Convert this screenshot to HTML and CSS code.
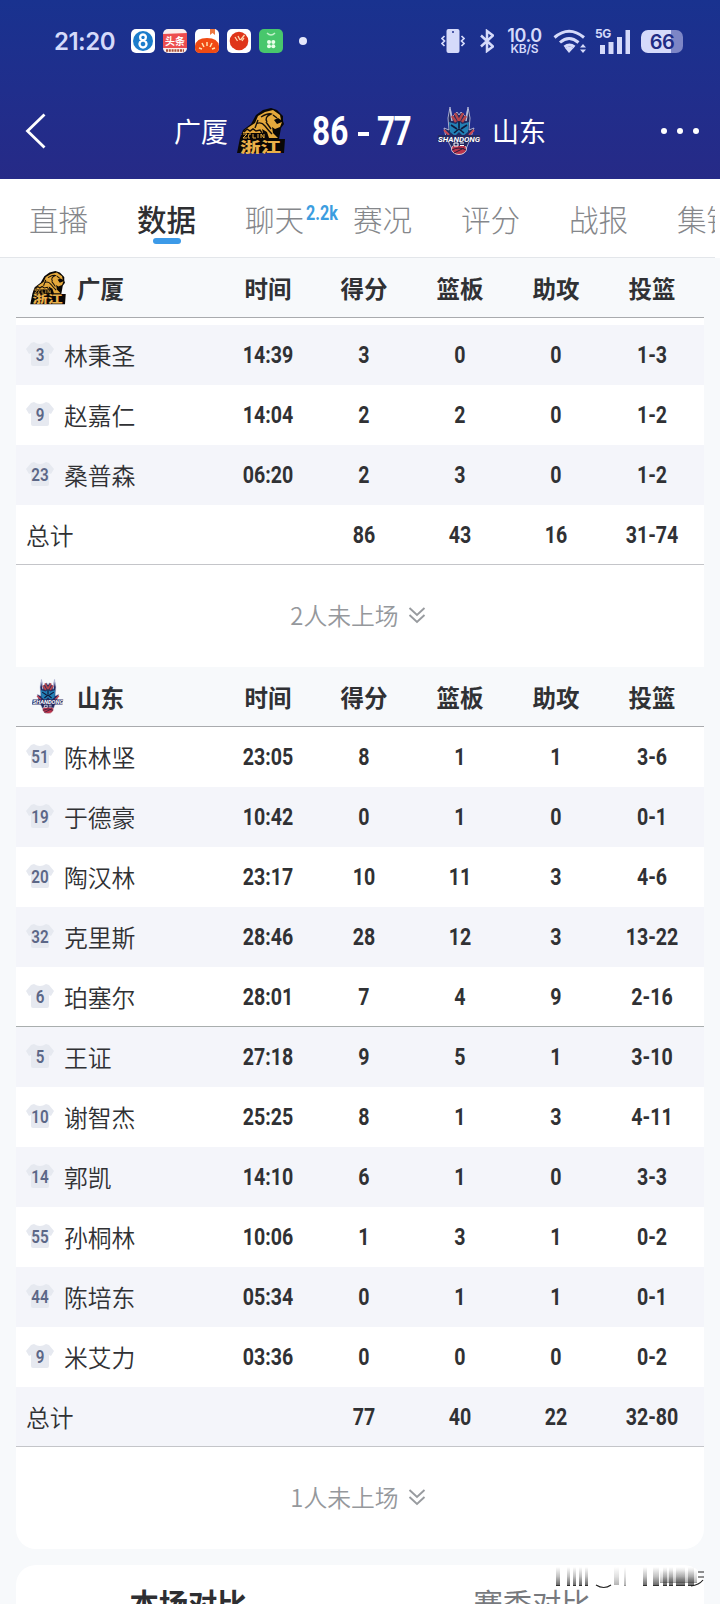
FILE: index.html
```html
<!doctype html>
<html lang="zh-CN">
<head>
<meta charset="utf-8">
<title>广厦 86 - 77 山东</title>
<link rel="stylesheet" href="styles.css">
</head>

<body>
<svg class="defs" width="0" height="0">
	<symbol id="shirt" viewBox="0 0 28 26">
		<path d="M8 1q6 4 12 0l3 1 5 6-3 5-2-1v11q0 2-2 2H7q-2 0-2-2V12l-2 1-3-5 5-6z"/>
	</symbol>
	<symbol id="lion" viewBox="0 0 48 46">
		<path d="M0 45l3-15 3-8 8-6 5-9 7-5 8-2 6 2 6 6v5l1 3-3 4-2 11h6l-1 14z" fill="#090706"/>
		<path d="M9 21l9-6 3-7 7-4 8-2 7 5 1 5-3-2-4 2 3 4 5-2-2 5-5 2-3-2 1 6 5 5h-9l-2-6-5-3 2 8h-5l-4-4-4 3-5-3-5 2z" fill="#e5a93c"/>
		<path d="M24 9q7-4 10-3-7 3-4 8M19 16q5-3 9 2 3 4 7 8M21 12l-3 8M36 7l4 3M29 14l5 7" fill="none" stroke="#16100a" stroke-width="1.4"/>
		<path d="M7 24l3-3 3 2 3-2 3 2 4-1 2 3" fill="none" stroke="#16100a" stroke-width="1.5"/>
		<path d="M5 25h22v6H4z" fill="#090706"/>
		<path d="M6 26h4l-4 4h4M14 26h-2l-1 4h2M16 26v4h3M21 26v4M24 30v-4l3 4v-4" fill="none" stroke="#e5a93c"/>
		<text class="lion-cn" x="3" y="43.500" textLength="41" lengthAdjust="spacingAndGlyphs">浙江</text>
	</symbol>
	<symbol id="kirin" viewBox="0 0 44 48">
		<path d="M13 0l2 10 5-5 2 3 2-3 5 5 2-10 2 11-1 12 5-2-3 9-5 12-7 6-7-6-6-12-2-9 5 2-1-12z" fill="#232a61" stroke="#c9cce4" stroke-width=".8"/>
		<path d="M13 2l2 12M31 2l-2 12" stroke="#b9bddc" stroke-width="1.500"/>
		<path d="M18 6l4 8 4-8M15 9l4 6M29 9l-4 6" stroke="#b5454c" stroke-width="2.500" fill="none"/>
		<path d="M12 15l7 2 3-3 3 3 7-2-1 10-5 4-4-4-4 4-5-4z" fill="#2380b5"/>
		<path d="M14 18l6 4M30 18l-6 4M17 26l5-4 5 4M22 14v7" stroke="#10173b" stroke-width="1.600" fill="none"/>
		<path d="M7 23l5 5M37 23l-5 5" stroke="#c94954" stroke-width="2"/>
		<ellipse cx="22" cy="42" rx="7.500" ry="5.500" fill="#b9344c" stroke="#eee" stroke-width=".8"/>
		<path d="M15 43q7-4 14 0M17 46l10-5" fill="none" stroke="#281a3c"/>
		<path d="M1 28h42l-1 7H0zM15 34h14v5H16z" fill="#24285f"/>
		<text class="kirin-en" x="1" y="34.500" textLength="42" lengthAdjust="spacingAndGlyphs">SHANDONG</text>
		<path d="M17 36h4v3h-4zM23 36h4M23 38.500h4" fill="none" stroke="#fff"/>
	</symbol>
	<symbol id="more" viewBox="0 0 18 18">
		<path d="M1.500 2L9 9l7.500-7M1.500 9L9 16l7.500-7"/>
	</symbol>
</svg>

<header class="top">
	<div class="status">
		<span class="clock">21:20</span>
		<div class="apps">
			<svg viewBox="0 0 24 24"><rect width="24" height="24" rx="5" fill="#fff"/><circle cx="12" cy="12" r="10" fill="#1c7dcb"/><path class="eight" d="M12 5.500a2.900 2.900 0 1 0 .01 0zM12 11.500a3.500 3.500 0 1 0 .01 0z"/></svg>
			<svg viewBox="0 0 24 24"><rect width="24" height="24" rx="5" fill="#fbeeee"/><path d="M0 5l24-1v15H0z" fill="#ed4d50"/><text class="app-toutiao" x="12" y="16">头条</text><path d="M3 21.500h18" stroke="#a8523a" stroke-width="2.500" stroke-dasharray="2 .8"/></svg>
			<svg viewBox="0 0 24 24"><rect width="24" height="24" rx="5" fill="#fff"/><path d="M0 17Q1 9 12 9t12 8v2q0 5-5 5H5q-5 0-5-5z" fill="#f04a13"/><path d="M15 0h5v6l-2.500-2L15 6z" fill="#ee7841"/><path d="M12 13v4M7 14l2 4M17 14l-2 4M4 19l3 1M20 19l-3 1" stroke="#ffe3b0" stroke-width="1.500"/></svg>
			<svg viewBox="0 0 24 24"><rect width="24" height="24" rx="5" fill="#fff"/><circle cx="12" cy="12" r="9.300" fill="#df3519"/><path d="M8 8l2.500 4M11 7l2 4M13.500 11l4-5M15 12l2-3" stroke="#ffd9b0" stroke-width="1.300"/></svg>
			<svg viewBox="0 0 24 24"><rect width="24" height="24" rx="5" fill="#48c76c"/><path d="M8 4q4 4 8 0" fill="none" stroke="#c1f1ca" stroke-width="1.500"/><g fill="#e8ffe9"><circle cx="10" cy="13" r="2"/><circle cx="14.300" cy="13" r="2"/><circle cx="10" cy="17.300" r="2"/><circle cx="14.300" cy="17.300" r="2"/></g></svg>
		</div>
		<i class="dot"></i>

		<svg class="vibrate" viewBox="0 0 24 24"><rect x="5.500" width="13" height="24" rx="2"/><circle cx="12" cy="3" r="1" fill="#213091"/><path d="M3.500 7L1 9.500 3.500 12 1 14.500 3.500 17M20.500 7L23 9.500 20.500 12l2.500 2.500-2.500 2.500"/></svg>
		<svg class="bluetooth" viewBox="0 0 14 24"><path d="M1 6.500l12 11L7 22V2l6 4.500-12 11"/></svg>
		<div class="speed"><b>10.0</b><span>KB/S</span></div>
		<svg class="wifi" viewBox="0 0 34 24"><path d="M1.500 8.500Q16 -4 31 8.500M7 13.500q9-8 18.500 0M11.500 18q5-4 10 0" /><path class="fill" d="M12 19q4.500-3 8.500 0L16 24zM27 18.500l3-3.500 3 3.500zM27 20.500h6L30 24z"/></svg>
		<div class="signal"><b>5G</b><svg viewBox="0 0 34 25"><path d="M4 16h5v9H4zM12.500 13h5v12h-5zM21 8h5v17h-5zM29.500 1h5v24h-5z"/></svg></div>
		<div class="battery"><span>66</span></div>
	</div>

	<div class="match">
		<svg class="back" viewBox="0 0 22 38"><path d="M19.500 2.500L2.500 19l17 16.500"/></svg>
		<span class="team home">广厦</span>
		<svg class="logo"><use href="#lion"/></svg>
		<div class="score"><b>86</b><i></i><b>77</b></div>
		<svg class="logo kirin"><use href="#kirin"/></svg>
		<span class="team">山东</span>
		<div class="menu"><i></i><i></i><i></i></div>
	</div>
</header>

<nav class="tabs">
	<a>直播</a>
	<a class="on">数据</a>
	<a>聊天<sup>2.2k</sup></a>
	<a>赛况</a>
	<a>评分</a>
	<a>战报</a>
	<a>集锦</a>
</nav>

<section class="card">
	<div class="row head">
		<div class="side"><svg class="mini"><use href="#lion"/></svg>广厦</div>
		<span>时间</span><span>得分</span><span>篮板</span><span>助攻</span><span>投篮</span>
	</div>
	<div class="list first">
		<div class="row gray"><div class="player"><em><svg><use href="#shirt"/></svg><b>3</b></em>林秉圣</div><b>14:39</b><b>3</b><b>0</b><b>0</b><b>1-3</b></div>
		<div class="row"><div class="player"><em><svg><use href="#shirt"/></svg><b>9</b></em>赵嘉仁</div><b>14:04</b><b>2</b><b>2</b><b>0</b><b>1-2</b></div>
		<div class="row gray"><div class="player"><em><svg><use href="#shirt"/></svg><b>23</b></em>桑普森</div><b>06:20</b><b>2</b><b>3</b><b>0</b><b>1-2</b></div>
		<div class="row line"><div class="player">总计</div><b></b><b>86</b><b>43</b><b>16</b><b>31-74</b></div>
	</div>
	<div class="rest">2人未上场<svg><use href="#more"/></svg></div>

	<div class="row head">
		<div class="side"><svg class="mini kirin"><use href="#kirin"/></svg>山东</div>
		<span>时间</span><span>得分</span><span>篮板</span><span>助攻</span><span>投篮</span>
	</div>
	<div class="list">
		<div class="row"><div class="player"><em><svg><use href="#shirt"/></svg><b>51</b></em>陈林坚</div><b>23:05</b><b>8</b><b>1</b><b>1</b><b>3-6</b></div>
		<div class="row gray"><div class="player"><em><svg><use href="#shirt"/></svg><b>19</b></em>于德豪</div><b>10:42</b><b>0</b><b>1</b><b>0</b><b>0-1</b></div>
		<div class="row"><div class="player"><em><svg><use href="#shirt"/></svg><b>20</b></em>陶汉林</div><b>23:17</b><b>10</b><b>11</b><b>3</b><b>4-6</b></div>
		<div class="row gray"><div class="player"><em><svg><use href="#shirt"/></svg><b>32</b></em>克里斯</div><b>28:46</b><b>28</b><b>12</b><b>3</b><b>13-22</b></div>
		<div class="row line dark"><div class="player"><em><svg><use href="#shirt"/></svg><b>6</b></em>珀塞尔</div><b>28:01</b><b>7</b><b>4</b><b>9</b><b>2-16</b></div>
		<div class="row gray"><div class="player"><em><svg><use href="#shirt"/></svg><b>5</b></em>王证</div><b>27:18</b><b>9</b><b>5</b><b>1</b><b>3-10</b></div>
		<div class="row"><div class="player"><em><svg><use href="#shirt"/></svg><b>10</b></em>谢智杰</div><b>25:25</b><b>8</b><b>1</b><b>3</b><b>4-11</b></div>
		<div class="row gray"><div class="player"><em><svg><use href="#shirt"/></svg><b>14</b></em>郭凯</div><b>14:10</b><b>6</b><b>1</b><b>0</b><b>3-3</b></div>
		<div class="row"><div class="player"><em><svg><use href="#shirt"/></svg><b>55</b></em>孙桐林</div><b>10:06</b><b>1</b><b>3</b><b>1</b><b>0-2</b></div>
		<div class="row gray"><div class="player"><em><svg><use href="#shirt"/></svg><b>44</b></em>陈培东</div><b>05:34</b><b>0</b><b>1</b><b>1</b><b>0-1</b></div>
		<div class="row"><div class="player"><em><svg><use href="#shirt"/></svg><b>9</b></em>米艾力</div><b>03:36</b><b>0</b><b>0</b><b>0</b><b>0-2</b></div>
		<div class="row gray line"><div class="player">总计</div><b></b><b>77</b><b>40</b><b>22</b><b>32-80</b></div>
	</div>
	<div class="rest">1人未上场<svg><use href="#more"/></svg></div>
</section>

<section class="compare">
	<a class="on">本场对比</a>
	<a>赛季对比</a>
	<svg class="mark" viewBox="0 0 150 22">
		<linearGradient id="fade" x2="0" y2="1"><stop offset="0" stop-color="#222" stop-opacity="0"/><stop offset=".5" stop-color="#222" stop-opacity=".28"/><stop offset=".92" stop-color="#222" stop-opacity=".65"/><stop offset="1" stop-color="#111"/></linearGradient>
		<g fill="url(#fade)">
			<path d="M1 0h4v19H1zM12 0h3v19h-3zM18 0h3v19h-3zM24 0h3v19h-3zM30 0h3v19h-3z"/>
			<path d="M59 0h5v18h-5zM69 0h2v19h-2z" opacity=".5"/>
			<path d="M88 0h4v19h-4zM98 0h6v19h-6zM108 0h4v19h-4zM114 0h4v19h-4zM121 0h9v19h-9zM133 0h6v19h-6z"/>
			<path d="M105 3h37v13h-37z" opacity=".5"/>
		</g>
		<path d="M41 18q8 5 15 0M136 19q8-1 12-6M143 5h6M143 10h6" fill="none" stroke="#222" stroke-width="1.200"/>
	</svg>
</section>
</body>
</html>
```

FILE: styles.css
```css
*{ margin:0; padding:0; box-sizing:border-box;}
body{ width:720px; height:1604px; overflow:hidden; background:#f7f9fb; color:#303134; font-family:"Noto Sans CJK SC","Noto Sans",sans-serif;}
i,em{ font-style:normal;}
svg{ display:block; flex:none;}
.defs{ position:absolute;}

/* 顶部 */
.top{ height:179px; background:linear-gradient(#19328f,#202e8c 50%,#262a87); color:#fff;}
.status{ height:82px; display:flex; align-items:center; padding-left:54px; color:#d5dafa; font-family:Inter,Roboto,sans-serif;}
.clock{ width:77px; font-size:24px; font-weight:600; letter-spacing:-.5px;}
.apps{ display:flex; gap:8px;}
.apps svg{ width:24px; height:24px;}
.eight{ fill:none; stroke:#fff; stroke-width:2.400;}
.app-toutiao{ font:bold 10px "Noto Sans CJK SC",sans-serif; fill:#fff; text-anchor:middle;}
.dot{ width:8px; height:8px; margin-left:16px; border-radius:50%; background:#e4e7fb;}
.vibrate{ width:24px; height:24px; margin-left:134px; fill:#d5dafa;}
.vibrate path{ fill:none; stroke:#d5dafa; stroke-width:1.700;}
.bluetooth{ width:14px; height:24px; margin-left:15px; fill:none; stroke:#d5dafa; stroke-width:2.500;}
.speed{ width:37px; margin-left:12px; text-align:center;}
.speed b,.speed span{ display:block; font-weight:600;}
.speed b{ font-size:18px; line-height:14px; letter-spacing:-.4px;}
.speed span{ font-size:12px; line-height:11px; letter-spacing:-.2px;}
.wifi{ width:34px; height:24px; margin-left:10px; fill:none; stroke:#d5dafa; stroke-width:3;}
.wifi .fill{ fill:#d5dafa; stroke:none;}
.signal{ width:34px; height:25px; margin-left:9px; position:relative;}
.signal svg{ width:34px; height:25px; fill:#d5dafa;}
.signal b{ position:absolute; left:-1px; top:-1px; font-size:12px; line-height:12px; font-weight:700; letter-spacing:-.3px;}
.battery{ width:42px; height:23px; margin-left:11px; border-radius:7px; background:linear-gradient(90deg,#d5dafa 30px,#7d86c6 30px); text-align:center;}
.battery span{ font-size:20px; line-height:24px; font-weight:600; letter-spacing:-.5px; color:#1f2c84;}

.match{ height:97px; display:flex; align-items:center; padding-left:25px;}
.back{ width:22px; height:38px; fill:none; stroke:#fff; stroke-width:2.800;}
.team{ font-size:27px; line-height:40px; width:54px;}
.team.home{ margin-left:127px;}
.logo{ width:48px; height:46px; margin-left:9px;}
.logo.kirin{ width:44px; height:48px; margin:0 11px 0 27px;}
.lion-cn{ font:900 14px "Noto Sans CJK SC",sans-serif; fill:#eab04a;}
.kirin-en{ font:italic bold 8px Roboto,sans-serif; fill:#fff;}
.score{ width:98px; margin-left:27px; display:flex; align-items:center; font-family:Roboto,sans-serif; font-size:40px; line-height:46px;}
.score b{ flex:none; width:36px; padding-top:2px; transform:scaleX(.79); transform-origin:0 50%;}
.score b:last-child{ letter-spacing:-2px;}
.score i{ flex:none; width:11px; height:4px; margin:6px 8px 0 10px; background:#fff;}
.menu{ display:flex; gap:10px; margin-left:115px;}
.menu i{ width:6px; height:6px; border-radius:50%; background:#fff;}

/* 导航 */
.tabs{ height:79px; display:flex; overflow:hidden; padding-left:29px; border-right:5px solid #fff; box-shadow:inset 0 -1px #e3e6ea; background:#fff;}
.tabs a{ flex:none; width:108px; padding-top:18px; font-size:29.600px; line-height:43px; color:#85878b; position:relative; font-weight:300;}
.tabs .on{ color:#2e2f32; font-weight:500;}
.tabs .on:after{ content:""; position:absolute; left:16px; top:59px; width:28px; height:6px; border-radius:3px; background:#3c9ae8;}
.tabs sup{ position:absolute; left:61px; top:22px; font:bold 21px/24px Roboto,sans-serif; color:#3c9ddf; transform:scaleX(.77); transform-origin:0 50%;}

/* 数据表 */
.card{ margin:0 16px; border-radius:0 0 20px 20px; background:#fff; overflow:hidden;}
.row{ height:60px; display:grid; grid-template-columns:204px repeat(5,96px); align-items:center; text-align:center;}
.row > b{ font:700 24.800px/60px Roboto,sans-serif; transform:scaleX(.79);}
.head{ background:#f7f9fb; border-bottom:1px solid #a9abae; font-size:23.500px; font-weight:700;}
.side{ display:flex; align-items:center; padding-left:14px; text-align:left;}
.mini{ width:36px; height:34px; margin-right:11px;}
.mini.kirin{ width:32px; height:35px; margin:0 13px 0 2px;}
.first{ padding-top:7px;}
.gray{ background:#f4f5fa;}
.line{ border-bottom:1px solid #c4c5c9;}
.dark{ border-color:#a9aeae;}
.player{ height:56px; display:flex; align-items:center; padding:0 0 2px 10px; font-size:23.800px; font-weight:350;}
.player em{ width:28px; height:26px; margin-right:10px; display:grid;}
.player em > *{ grid-area:1/1;}
.player svg{ width:28px; height:26px; fill:#e6e9f0;}
.player em b{ text-align:center; font:600 19px/27px Roboto,sans-serif; color:#5c6787; transform:scaleX(.8);}
.rest{ height:102px; display:flex; align-items:center; justify-content:center; padding:0 4px 3px 0; font-size:23.800px; color:#95989c; font-weight:350;}
.rest svg{ width:18px; height:18px; margin-left:9px; fill:none; stroke:#989b9f; stroke-width:1.900;}

/* 对比 */
.compare{ height:60px; margin:16px 16px 0; display:flex; position:relative; border-radius:20px 20px 0 0; background:#fff;}
.compare a{ flex:1; padding-top:16px; text-align:center; font-size:29.300px; line-height:43px; color:#77797d;}
.compare .on{ color:#2e2f32; font-weight:700;}
.mark{ position:absolute; right:-1px; top:2px; width:150px; height:22px;}
```
